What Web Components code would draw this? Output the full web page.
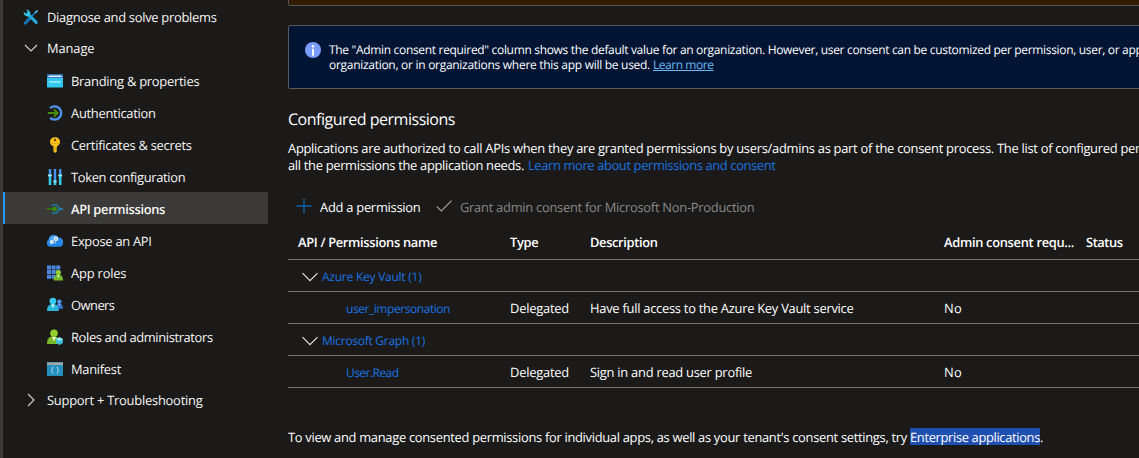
<!DOCTYPE html>
<html lang="en">
<head>
<meta charset="utf-8">
<title>API permissions</title>
<style>
html,body{margin:0;height:458px;overflow:hidden;background:#1b1a19}
body{font-family:"Open Sans","Noto Sans",sans-serif;color:#fff}
</style>
</head>
<body>
<portal-app></portal-app>
<script>
const define=(name,html,extra)=>{
  const t=document.createElement('template');t.innerHTML=html;
  customElements.define(name,class extends HTMLElement{
    connectedCallback(){
      if(this.shadowRoot)return;
      this.attachShadow({mode:'open'}).append(t.content.cloneNode(true));
      if(extra)extra(this,this.shadowRoot);
    }
  });
};

/* One line of text, tracked so that it spans the width given in "w". */
const probe=document.createElement('span');
probe.style.cssText='position:absolute;visibility:hidden;white-space:pre;text-rendering:geometricPrecision';
define('fit-text',`<style>
:host{display:inline-block;white-space:pre;text-rendering:geometricPrecision;flex:none}
</style><slot></slot>`,(el)=>{
  const size=el.getAttribute('s')||'12.9',weight=el.getAttribute('b')||'400';
  const w=+el.getAttribute('w'),text=el.textContent;
  probe.style.fontSize=size+'px';probe.style.fontWeight=weight;probe.textContent=text;
  document.body.append(probe);
  const natural=probe.getBoundingClientRect().width;
  probe.remove();
  el.style.fontSize=size+'px';el.style.fontWeight=weight;
  if(w){el.style.letterSpacing=((w-natural)/text.length).toFixed(4)+'px';el.style.width=w+'px';}
});

const ICONS={
diagnose:`<path d="M3 13.4 12.6 3.2" stroke="#1a86c9" stroke-width="1.3"/><path d="M12 3.8 14.6 1.4" stroke="#5fb8e8" stroke-width="1.6"/><path d="M2.4 14 7 9.2" stroke="#1577b8" stroke-width="3.2" stroke-linecap="round"/><path d="M4.6 4.6 13.2 13.4" stroke="#27a9dc" stroke-width="3" stroke-linecap="round"/><path d="M.8 2.8 3.1 5 4.8 4.7 5 3 3 .8A3.9 3.9 0 0 1 7.2 5.6L5.4 7.4A3.9 3.9 0 0 1 .8 2.8Z" fill="#32c8ee"/>`,
down:`<path d="m2 5 6 6 6-6" stroke="#d6d4d2" stroke-width="1.1"/>`,
expand:`<path d="m.5 4.2 7.5 7.5 7.5-7.5" stroke="#e4e2e0" stroke-width="1.2"/>`,
right:`<path d="m5 2 6 6-6 6" stroke="#d6d4d2" stroke-width="1.1"/>`,
branding:`<rect y="1.6" width="16" height="12.8" rx=".6" fill="#32c8ee"/><path d="M0 5V2.2q0-.6.6-.6h14.8q.6 0 .6.6V5Z" fill="#3478d4"/><path d="M1.5 3.3h13" stroke="#e8f4ff" stroke-width="1.4"/><path d="M2.5 9h11" stroke="#a6ecfb" stroke-width="1.8" stroke-dasharray="1.3 .4"/>`,
auth:`<path d="M3.1 3.2A6.6 6.6 0 1 1 3.1 12.8" stroke="#4f94f0" stroke-width="2.3"/><path d="M.8 8h9M6.8 4.2 10.6 8l-3.8 3.8" stroke="#478a0c" stroke-width="2"/>`,
key:`<path d="M8 .2c3 0 5 1.9 5 4.6 0 2-1 3.5-2.8 4.2v1l-1 .9 1 1-1 1 1 1L8 15.9 6.4 14.2V9.1C4.3 8.4 3 6.9 3 4.8 3 2.1 5 .2 8 .2Z" fill="#fcc419"/><circle cx="8" cy="3" r="1.25" fill="#6d4a00"/><path d="M7.7 9.5V14" stroke="#e59a08" stroke-width=".9"/><path d="M5 6.3h6" stroke="#eea50a" stroke-width=".9"/>`,
token:`<path d="M3 0v6M8 0v12M13.2 0v6" stroke="#4894f5" stroke-width="2.4"/><path d="M3 7v9M8 13v3M13.2 7v9" stroke="#35c9e8" stroke-width="2.6"/><path d="M1 6.3h4M6.3 12.3h3.4M11.2 6.3h4" stroke="#9eeaf9" stroke-width="1.8"/>`,
api:`<path d="M4.9 4.8A4.2 4.2 0 1 1 4.9 11.2" stroke="#1d7ba6" stroke-width="1.7"/><path d="M12 8h4" stroke="#2484b2" stroke-width="1.8"/><path d="M0 8h6" stroke="#347b0d" stroke-width="1.8"/><circle cx="7.7" cy="8" r="2.3" fill="#3f8b0c"/>`,
expose:`<path d="M3.8 13.8A3.8 3.8 0 0 1 1.6 6.7 5.2 5.2 0 0 1 11.4 4.6 4.6 4.6 0 0 1 12.3 13.8Z" fill="#2587e7"/><path d="M2 7A5 5 0 0 1 11 4.8L9 8Z" fill="#54a5f3"/><circle cx="9" cy="5.8" r="1.6" stroke="#e9f3ff" stroke-width="1.4"/><circle cx="4.8" cy="9" r="1.3" stroke="#e9f3ff" stroke-width="1.6"/><circle cx="8.4" cy="9.4" r=".8" fill="#cfe4ff"/>`,
roles:`<path d="M0 .5h4v4H0zM4.6.5h4v4h-4zM9.2.5h4v4h-4zM0 5.1h4v4H0zM4.6 5.1h4v4h-4zM9.2 5.1h4v4h-4zM0 9.7h4v4H0zM4.6 9.7h4v4h-4z" fill="#4c86dd"/><path d="M6.6 15.5c0-3.6 1.5-6 4.7-6s4.7 2.4 4.7 6Z" fill="#76b82a"/><circle cx="11.3" cy="7.6" r="2.6" fill="#8fcf2c"/><path d="m10 10.3 1.3 2.6 1.3-2.6Z" fill="#e9f7d2"/>`,
owners:`<path d="M9 11.8c0-3.8 1-5.3 3.3-5.3s3.7 1.6 3.7 5.3Z" fill="#3577dc"/><circle cx="12.3" cy="4.8" r="2.3" fill="#4f95ee"/><path d="M0 14c0-4.6 1.8-7 5.9-7s5.9 2.4 5.9 7Z" fill="#2cb9dd"/><circle cx="5.9" cy="4.1" r="3.4" fill="#38c9ec"/><path d="m4.3 7.6 1.6 3.6 1.6-3.6Z" fill="#e4faff"/><path d="m11.5 7.2.8 1.6.8-1.6Z" fill="#dceaff"/>`,
admins:`<path d="M0 15c0-5 2-7.7 6.4-7.7 4.3 0 6.4 2.7 6.4 7.7Z" fill="#79b82a"/><circle cx="7" cy="4.2" r="3.8" fill="#93cf2c"/><path d="m5 8 2 4.3L9 8Z" fill="#eef9dc"/><path d="m12.5 8.3 3.4 1.8v4L12.5 16 9 14.1v-4Z" fill="#3dbfe0"/><path d="m12.5 8.3 3.4 1.8-3.4 1.8L9 10.1Z" fill="#a2ecfa"/>`,
manifest:`<rect y="1" width="16" height="14" rx=".5" fill="#2390bd"/><path d="M0 1.5h16V4H0Z" fill="#a4a4a4"/><path d="M6.3 6.2q-1.1 0-1.1 1.1v1.2l-.9.8.9.8v1.2q0 1.1 1.1 1.1M9.7 6.2q1.1 0 1.1 1.1v1.2l.9.8-.9.8v1.2q0 1.1-1.1 1.1" stroke="#d5f1fb" stroke-width=".9"/>`,
plus:`<path d="M8 .5v15M.5 8h15" stroke="#1265a5" stroke-width="1.3"/>`,
check:`<path d="m.7 8.3 4.6 4.6L15.6 2.6" stroke="#a19f9d" stroke-width="1.2"/>`,
info:`<circle cx="8" cy="8" r="8" fill="#7a9cff"/><circle cx="8" cy="4.3" r="1.2" fill="#fff"/><path d="M8 6.7v7" stroke="#fff" stroke-width="2"/>`
};
define('ui-icon',`<style>:host{display:block;width:16px;height:16px;flex:none}svg{display:block;width:100%;height:100%}</style><svg viewBox="0 0 16 16" fill="none"></svg>`,
 (el,r)=>{r.querySelector('svg').innerHTML=ICONS[el.getAttribute('name')]});

const makeIcon=name=>{const i=document.createElement('ui-icon');i.setAttribute('name',name);return i};

define('nav-item',`<style>
:host{display:flex;align-items:center;height:32px;box-sizing:border-box;padding:2px 0 0 44px}
:host([top]){padding-left:20px}
ui-icon{margin-right:8px}
:host([selected]){background:#3b3a39;border-left:2px solid #2899f5;padding-left:42px}
</style><slot></slot>`,(el,r)=>{r.insertBefore(makeIcon(el.getAttribute('icon')),r.querySelector('slot'))});

define('side-nav',`<style>
:host{display:block;box-sizing:border-box;width:268px;height:458px;border-left:3px solid #3b3a39;color:#f7f6f5}
.short{height:32px;padding-top:0}
</style>
<nav>
<nav-item top icon="diagnose"><fit-text w="169.5">Diagnose and solve problems</fit-text></nav-item>
<nav-item top icon="down" class="short"><fit-text w="47.5">Manage</fit-text></nav-item>
<nav-item icon="branding"><fit-text w="128.3">Branding &amp; properties</fit-text></nav-item>
<nav-item icon="auth"><fit-text w="84.7">Authentication</fit-text></nav-item>
<nav-item icon="key"><fit-text w="120.7">Certificates &amp; secrets</fit-text></nav-item>
<nav-item icon="token"><fit-text w="114.3">Token configuration</fit-text></nav-item>
<nav-item icon="api" selected><fit-text b="600" w="94">API permissions</fit-text></nav-item>
<nav-item icon="expose"><fit-text w="80.7">Expose an API</fit-text></nav-item>
<nav-item icon="roles"><fit-text w="55.3">App roles</fit-text></nav-item>
<nav-item icon="owners"><fit-text w="43.5">Owners</fit-text></nav-item>
<nav-item icon="admins"><fit-text w="141.7">Roles and administrators</fit-text></nav-item>
<nav-item icon="manifest"><fit-text w="50">Manifest</fit-text></nav-item>
<nav-item top icon="right" class="short"><fit-text w="155.5">Support + Troubleshooting</fit-text></nav-item>
</nav>`);

define('info-banner',`<style>
:host{display:flex;box-sizing:border-box;height:64px;width:900px;border:1px solid #55595c;border-radius:2px;background:#001433;padding:16px 0 0 16px}
ui-icon{margin-right:8px}
.t{display:flex;flex-direction:column}
</style><ui-icon name="info"></ui-icon><div class="t"><slot></slot></div>`);

define('perm-row',`<style>
:host{display:grid;grid-template-columns:222px 80px 354px 142px 1fr;height:32px;box-sizing:border-box;border-bottom:1px solid #797775;align-items:center;padding-top:1px}
:host([head]){height:34px;padding:0 0 1px}
.name{display:flex;align-items:center;padding-left:var(--indent,10px)}
:host(:not([head])) .name{color:#1a73e0;padding-top:1px}
ui-icon{margin-right:4px}
</style><div class="name"><slot name="name"></slot></div><slot></slot>`,(el,r)=>{
 if(el.hasAttribute('group')){r.querySelector('.name').prepend(makeIcon('expand'));el.style.setProperty('--indent','14px')}
 else if(!el.hasAttribute('head'))el.style.setProperty('--indent','58px');
});

define('perm-page',`<style>
:host{display:block;width:871px;overflow:hidden;padding-left:20px;box-sizing:border-box}
.warn{height:6px;box-sizing:border-box;width:900px;border:1px solid #55595c;border-top:0;background:#331b00;border-radius:0 0 2px 2px;margin-bottom:19px}
.line{display:flex;height:15px;line-height:15px;gap:3px}
h2{margin:16px 0 0;height:22px;line-height:22px;font-weight:400}
.p{display:flex;height:17px;line-height:17px;gap:4px}
.bar{display:flex;align-items:center;height:20px;margin:23px 0 0 8px}
.table{margin-top:9px;width:900px}
.foot{display:flex;margin-top:40px;height:17px;line-height:17px}
.foot fit-text{height:17px;line-height:18px}
.hl{background:#1f4fb0}
.link{color:#1a73e0}
</style>
<div class="warn"></div>
<info-banner>
<div class="line"><fit-text s="12" w="813.5">The "Admin consent required" column shows the default value for an organization. However, user consent can be customized per permission, user, or app</fit-text></div>
<div class="line"><fit-text s="12" w="321">organization, or in organizations where this app will be used.</fit-text><fit-text s="12" w="60.5" style="color:#6cb8f6;text-decoration:underline">Learn more</fit-text></div>
</info-banner>
<h2><fit-text s="16" w="167">Configured permissions</fit-text></h2>
<div class="p" style="margin-top:13px"><fit-text w="852">Applications are authorized to call APIs when they are granted permissions by users/admins as part of the consent process. The list of configured per</fit-text></div>
<div class="p"><fit-text w="236">all the permissions the application needs.</fit-text><fit-text class="link" w="247.5">Learn more about permissions and consent</fit-text></div>
<div class="bar"><ui-icon name="plus" style="margin-bottom:2px"></ui-icon><fit-text w="100.5" style="margin-left:8px">Add a permission</fit-text><ui-icon name="check" style="margin:0 8px 2px 15.5px"></ui-icon><fit-text w="294.5" style="color:#8a8886">Grant admin consent for Microsoft Non-Production</fit-text></div>
<div class="table">
<perm-row head><fit-text slot="name" b="600" w="139">API / Permissions name</fit-text><fit-text b="600" w="28.5">Type</fit-text><fit-text b="600" w="67.5">Description</fit-text><fit-text b="600" w="130">Admin consent requ...</fit-text><fit-text b="600" w="36.5">Status</fit-text></perm-row>
<perm-row group><fit-text slot="name" s="12" w="99.5">Azure Key Vault (1)</fit-text></perm-row>
<perm-row><fit-text slot="name" s="12" w="104">user_impersonation</fit-text><fit-text w="59">Delegated</fit-text><fit-text w="263.5">Have full access to the Azure Key Vault service</fit-text><fit-text w="18">No</fit-text></perm-row>
<perm-row group><fit-text slot="name" s="12" w="103">Microsoft Graph (1)</fit-text></perm-row>
<perm-row><fit-text slot="name" s="12" w="52.5">User.Read</fit-text><fit-text w="59">Delegated</fit-text><fit-text w="162">Sign in and read user profile</fit-text><fit-text w="18">No</fit-text></perm-row>
</div>
<div class="foot"><fit-text w="622">To view and manage consented permissions for individual apps, as well as your tenant's consent settings, try </fit-text><fit-text class="hl" w="130">Enterprise applications</fit-text><fit-text w="3">.</fit-text></div>
`);

define('portal-app',`<style>:host{display:flex;width:1139px;height:458px;overflow:hidden}</style><side-nav></side-nav><perm-page></perm-page>`);
</script>
</body>
</html>
